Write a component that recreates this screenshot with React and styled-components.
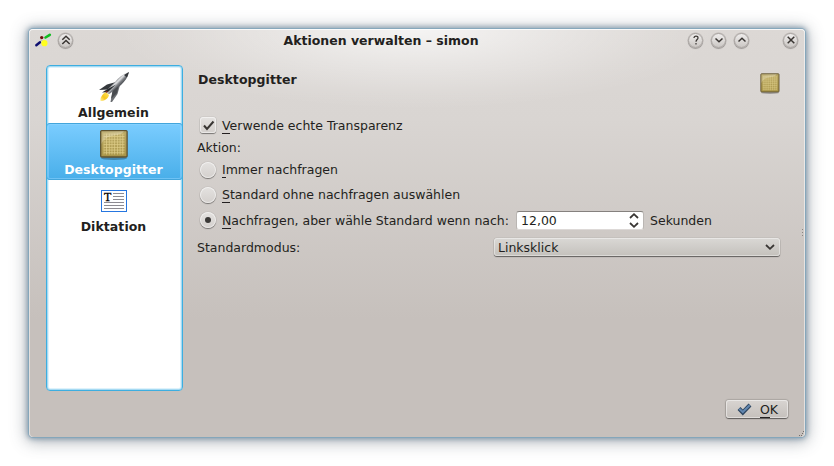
import React from "react";
import styled, { createGlobalStyle, css } from "styled-components";

const Global = createGlobalStyle`
  * { box-sizing: border-box; }
  body { margin: 0; background: #fff; font: 12.5px/15px "DejaVu Sans", sans-serif; color: #231f20; }
  svg { display: block; flex: none; overflow: visible; }
`;

const Desktop = styled.div`
  height: 466px;
  overflow: hidden;
  padding: 29px;
`;

const Window = styled.div`
  position: relative;
  width: 776px;
  height: 408px;
  border-radius: 4px;
  background:
    radial-gradient(ellipse 300px 80px at 388px 0, rgba(255,255,255,.72), rgba(255,255,255,.36) 45%, rgba(255,255,255,.1) 80%, rgba(255,255,255,0)),
    linear-gradient(#dcd8d5 0, #d9d5d2 90px, #c6c0bc 290px, #c6c0bc 100%);
  box-shadow:
    inset 0 1px 0 rgba(255,255,255,.8),
    inset 1px 0 0 rgba(255,255,255,.5),
    inset -1px 0 0 rgba(255,255,255,.5),
    0 0 0 1px rgba(125,165,188,.7),
    0 0 5px 2px rgba(85,120,148,.6),
    0 2px 16px 3px rgba(70,80,90,.42);
`;

const TitleBar = styled.header`
  display: flex;
  align-items: center;
  height: 22px;
  padding: 0 7px 0 6px;
`;

const Title = styled.h1`
  flex: 1;
  margin: 0;
  padding-top: 1px;
  padding-left: 1px;
  text-align: center;
  font-size: 12.5px;
  line-height: 15px;
`;

const TitleButtons = styled.div`
  display: flex;
  gap: 8px;
  margin-right: ${p => p.$end || 0}px;
  margin-left: ${p => p.$start || 0}px;
`;

const RoundButton = styled.button`
  display: grid;
  place-items: center;
  width: 15px;
  height: 15px;
  padding: 0;
  border: 1px solid #a8a3a0;
  border-radius: 50%;
  background: linear-gradient(#efedec, #cbc7c4);
  box-shadow: 0 1px 1px rgba(0,0,0,.22), 0 0 0 .5px rgba(90,85,82,.25);
`;

const Body = styled.div`
  display: flex;
  padding: 14px 24px 0 17px;
`;

const Sidebar = styled.nav`
  width: 137px;
  height: 326px;
  padding: 0 1px;
  border: 1px solid #3daee0;
  border-radius: 4px;
  background: #fff;
  box-shadow: inset 0 0 0 1px #a5daf3, inset 0 0 0 2px #def2fb;
`;

const SideItem = styled.a`
  display: flex;
  flex-direction: column;
  align-items: center;
  height: 57px;
  padding: 5px 2px 0 0;
  font-weight: bold;
  ${p => p.$active && css`
    margin: 0 -1px;
    color: #fff;
    background: linear-gradient(#7bcdff, #48aee9);
    border-radius: 3px;
    box-shadow: inset 0 1px #43a5db, inset 0 -1px #43a5db, inset 0 0 0 2px rgba(145,213,255,.5);
  `}
`;

const SideLabel = styled.span`
  line-height: 17px;
  margin-top: 1px;
  letter-spacing: .06px;
`;

const Main = styled.main`
  flex: 1;
  margin-left: 14px;
`;

const PageHeader = styled.div`
  display: flex;
  justify-content: space-between;
  height: 48px;
  padding: 7px 0 0 1px;
`;

const PageTitle = styled.h2`
  margin: 0;
  font-size: 12.5px;
  line-height: 15px;
  letter-spacing: .06px;
`;

const Row = styled.div`
  display: flex;
  align-items: center;
  height: ${p => p.$h}px;
`;

const Choice = styled.label`
  display: flex;
  align-items: center;
  gap: 6px;
  padding-left: 3px;
`;

const raised = css`
  background: linear-gradient(#e4e2e0, #d4d0cd);
  box-shadow: 0 1px 1px rgba(0,0,0,.42), 0 0 1px rgba(0,0,0,.4), inset 0 0 0 1px rgba(255,255,255,.5);
`;

const Mark = styled.span`
  display: grid;
  place-items: center;
  width: 16px;
  height: 16px;
  border-radius: ${p => (p.$round ? "50%" : "3px")};
  ${raised}
`;

const Dot = styled.span`
  width: 6px;
  height: 6px;
  border-radius: 50%;
  background: #3b3937;
`;

const Key = styled.span`
  box-shadow: 0 1px #231f20;
`;

const SpinBox = styled.div`
  display: flex;
  align-items: center;
  justify-content: space-between;
  width: 128px;
  height: 19px;
  margin: 0 6px 0 7px;
  padding: 0 5px 0 4px;
  border-radius: 3px;
  background: #fff;
  border: 1px solid #bab6b3;
  border-top-color: #85817e;
  border-bottom-color: #ddd9d7;
`;

const Select = styled.div`
  display: flex;
  align-items: center;
  justify-content: space-between;
  width: 286px;
  height: 18px;
  margin-left: auto;
  margin-right: 1px;
  padding: 0 5px 0 4px;
  border-radius: 3px;
  background: linear-gradient(#dad8d5, #c4c1bc);
  box-shadow: 0 1px 1px rgba(0,0,0,.5), 0 0 1px rgba(0,0,0,.4), inset 0 0 0 1px rgba(255,255,255,.4);
`;

const Footer = styled.footer`
  display: flex;
  justify-content: flex-end;
  padding: 9px 17px 0 0;
`;

const Button = styled.button`
  display: flex;
  align-items: center;
  gap: 8px;
  width: 62px;
  height: 18px;
  padding: 1px 0 0 11px;
  border: 0;
  border-radius: 3px;
  font: 12.5px/15px "DejaVu Sans", sans-serif;
  color: #231f20;
  background: linear-gradient(#d8d4d1, #c5c0bc);
  box-shadow: 0 1px 1px rgba(0,0,0,.45), 0 0 1px 1px rgba(0,0,0,.14), inset 0 0 0 1px rgba(255,255,255,.45);
`;

const Grip = styled.div`
  position: absolute;
  right: ${p => p.$right}px;
  bottom: ${p => p.$bottom}px;
`;

const glyphs = {
  shade: "M2.300 5.800 6 2.300 9.700 5.800M2.300 10 6 6.500 9.700 10",
  down: "M2.500 4.500 6 7.800 9.500 4.500",
  up: "M2.500 7.500 6 4.200 9.500 7.500",
  close: "M2.700 2.700 9.300 9.300M9.300 2.700 2.700 9.300",
  help: "M4 4C4 1.400 8.200 1.400 8 4C8 5.500 6 5.600 6 7.700M6 9V10.500",
};

function WindowButton({ kind }) {
  return (
    <RoundButton aria-label={kind}>
      <svg width="12" height="12" viewBox="0 0 12 12" fill="none" stroke="#393532" strokeWidth={kind === "help" ? 1.2 : 1.5}>
        <path d={glyphs[kind]} />
      </svg>
    </RoundButton>
  );
}

function AppLogo() {
  return (
    <svg width="16" height="14" viewBox="0 0 16 14" strokeLinecap="round">
      <path d="M10.500 4.500 14.800 1.800" stroke="#12bd22" strokeWidth="2.600" />
      <path d="M1.300 12.200 5 9.200" stroke="#101070" strokeWidth="2.400" />
      <path d="M5.500 7 8 8" stroke="#b8b8b8" strokeWidth="1" />
      <circle cx="6.700" cy="4.600" r="1.700" fill="#701010" />
      <circle cx="9.400" cy="10.200" r="3.100" fill="#ffff20" />
    </svg>
  );
}

function Rocket() {
  return (
    <svg width="32" height="32" viewBox="0 0 32 32">
      <defs>
        <linearGradient id="hull" gradientUnits="userSpaceOnUse" x1="15" y1="10" x2="22" y2="17">
          <stop offset="0" stopColor="#55585c" />
          <stop offset=".38" stopColor="#e4e5e7" />
          <stop offset=".6" stopColor="#7b7e83" />
          <stop offset="1" stopColor="#2f3236" />
        </linearGradient>
        <linearGradient id="flame" x1="1" y1="0" x2="0" y2="1">
          <stop offset="0" stopColor="#ffe96a" />
          <stop offset=".6" stopColor="#f5c51c" />
          <stop offset="1" stopColor="#fff0a0" />
        </linearGradient>
      </defs>
      <path d="M8 21C4 23 2 27 2.500 30C6 30 10 28 11 24Z" fill="url(#flame)" />
      <path d="M18 11 9 13.500 1 19 10 18.500Z" fill="#34383c" />
      <path d="M22 14 19.500 23 14 31 12.500 31 14.500 21Z" fill="#6b6e72" />
      <path d="M31 1C25 3 20 7 17 11L9 19C7.500 21 10 23.500 12 22.500L23 14C27 10 30 6 31 1Z" fill="url(#hull)" />
      <path d="M31 1 26 4 29 6.500Z" fill="#33363a" />
      <path d="M18 13.500 8 19 4 21.500 10 21Z" fill="#25292d" />
      <path d="M20.500 15 14.500 20 13 28 19 22Z" fill="#484b4f" />
      <circle cx="8.700" cy="20.700" r="1" fill="#7a241c" />
    </svg>
  );
}

function GridTile({ size }) {
  return (
    <svg width={size} height={size} viewBox="0 0 32 32">
      <defs>
        <linearGradient id="tile" x1="0" y1="0" x2="0" y2="1">
          <stop offset="0" stopColor="#b9a865" />
          <stop offset="1" stopColor="#a99548" />
        </linearGradient>
        <pattern id="mesh" width="2.700" height="2.700" patternUnits="userSpaceOnUse">
          <path d="M0 .5H2.700M.5 0V2.700" stroke="#dccb85" strokeWidth=".8" />
        </pattern>
        <linearGradient id="shine" x1="0" y1="0" x2="1" y2="1">
          <stop offset="0" stopColor="#fff" stopOpacity=".15" />
          <stop offset="1" stopColor="#fff" stopOpacity=".8" />
        </linearGradient>
      </defs>
      <ellipse cx="16" cy="30.300" rx="13" ry="1.600" fill="#000" opacity=".28" />
      <rect x="2.700" y="2.600" width="26.400" height="26.400" rx="1" fill="url(#tile)" stroke="#5e5230" strokeWidth="1.300" />
      <rect x="5.500" y="5.500" width="21" height="21" fill="url(#mesh)" />
      <path d="M3.500 3.300H26C23 7 19 7 14 8C8 9 5 12 3.500 16Z" fill="url(#shine)" opacity=".6" />
    </svg>
  );
}

function TextPage() {
  return (
    <svg width="32" height="32" viewBox="0 0 32 32">
      <rect x="3.500" y="5.500" width="25" height="21" fill="#fff" stroke="#2676e0" />
      <path d="M15 8.500H26M15 11.500H26M15 14.500H26M6 17.500H26M6 20.500H26M6 23.500H26" stroke="#8d8b92" />
      <text x="6" y="15.500" fontFamily="Liberation Serif, serif" fontSize="12" fontWeight="normal" fill="#000" stroke="#000" strokeWidth=".3">T</text>
    </svg>
  );
}

function Chevron({ up }) {
  return (
    <svg width="10" height="6" viewBox="0 0 10 6" fill="none" stroke="#393633" strokeWidth="1.800">
      <path d={up ? "M1 5 5 1.200 9 5" : "M1 1 5 4.800 9 1"} />
    </svg>
  );
}

const Arrows = styled.span`
  display: grid;
  gap: 3px;
  margin-right: -1px;
`;

const pages = [
  { label: "Allgemein", icon: <Rocket /> },
  { label: "Desktopgitter", icon: <GridTile size={32} />, active: true },
  { label: "Diktation", icon: <TextPage /> },
];

function Radio({ hotkey, children, checked }) {
  return (
    <Choice>
      <Mark $round>{checked && <Dot />}</Mark>
      <span><Key>{hotkey}</Key>{children}</span>
    </Choice>
  );
}

export default function App() {
  return (
    <Desktop>
      <Global />
      <Window>
        <TitleBar>
          <AppLogo />
          <TitleButtons $start={7}><WindowButton kind="shade" /></TitleButtons>
          <Title>Aktionen verwalten – simon</Title>
          <TitleButtons $end={34}>
            <WindowButton kind="help" />
            <WindowButton kind="down" />
            <WindowButton kind="up" />
          </TitleButtons>
          <WindowButton kind="close" />
        </TitleBar>
        <Body>
          <Sidebar>
            {pages.map(p => (
              <SideItem key={p.label} $active={p.active}>
                {p.icon}
                <SideLabel>{p.label}</SideLabel>
              </SideItem>
            ))}
          </Sidebar>
          <Main>
            <PageHeader>
              <PageTitle>Desktopgitter</PageTitle>
              <GridTile size={22} />
            </PageHeader>
            <Row $h={24}>
              <Choice>
                <Mark>
                  <svg width="11" height="11" viewBox="0 0 11 11" fill="none" stroke="#393633" strokeWidth="2">
                    <path d="M1 5.500 4 9 10.500 1.500" />
                  </svg>
                </Mark>
                <span><Key>V</Key>erwende echte Transparenz</span>
              </Choice>
            </Row>
            <Row $h={20}>Aktion:</Row>
            <Row $h={25}><Radio hotkey="I">mmer nachfragen</Radio></Row>
            <Row $h={25}><Radio hotkey="S">tandard ohne nachfragen auswählen</Radio></Row>
            <Row $h={26}>
              <Radio hotkey="N" checked>achfragen, aber wähle Standard wenn nach:</Radio>
              <SpinBox>
                12,00
                <Arrows><Chevron up /><Chevron /></Arrows>
              </SpinBox>
              Sekunden
            </Row>
            <Row $h={28}>
              Standardmodus:
              <Select>Linksklick<Chevron /></Select>
            </Row>
          </Main>
        </Body>
        <Footer>
          <Button>
            <svg width="15" height="12" viewBox="0 0 15 12" fill="none">
              <path d="M2 4.500 5.800 8.500 13 1" stroke="#2d4560" strokeWidth="4" />
              <path d="M2.300 4.700 5.800 8 12.700 1.300" stroke="#6287b0" strokeWidth="2" />
            </svg>
            <span><Key>O</Key>K</span>
          </Button>
        </Footer>
        <Grip $right={1} $bottom={200}>
          <svg width="2" height="8" viewBox="0 0 2 8" fill="#8b8683">
            <path d="M0 0H1V1H0ZM0 3H1V4H0ZM0 6H1V7H0Z" />
          </svg>
        </Grip>
        <Grip $right={1} $bottom={1}>
          <svg width="5" height="5" viewBox="0 0 5 5" fill="#746f6c">
            <path d="M4 0H5V1H4ZM3 2H4V3H3ZM0 4H1V5H0ZM2 4H3V5H2Z" />
          </svg>
        </Grip>
      </Window>
    </Desktop>
  );
}
